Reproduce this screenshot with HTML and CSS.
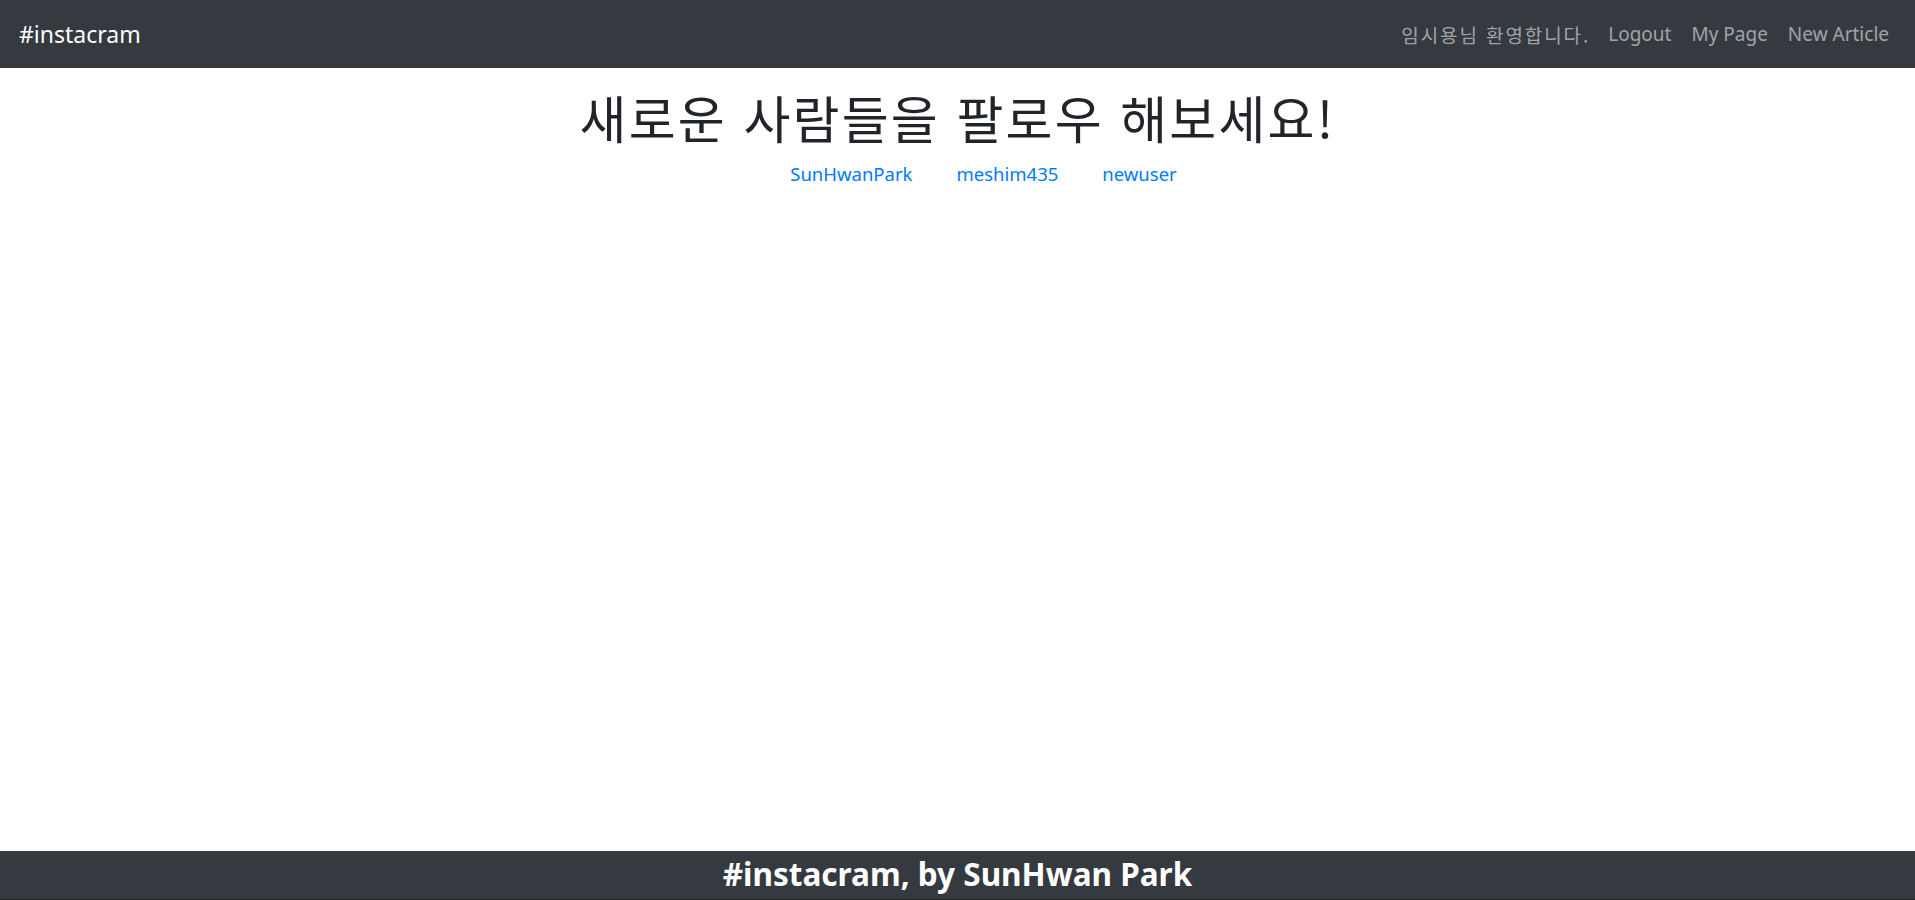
FILE: index.html
```html
<!DOCTYPE html>
<html lang="ko">
<head>
<meta charset="utf-8">
<title>#instacram</title>
<link rel="stylesheet" href="styles.css">
</head>
<body>
<div class="page">
  <nav class="navbar">
    <a class="brand" href="#">#instacram</a>
    <ul class="nav">
      <li class="nav-text">임시용님 환영합니다.</li>
      <li><a class="nav-link" href="#">Logout</a></li>
      <li><a class="nav-link" href="#">My Page</a></li>
      <li><a class="nav-link" href="#">New Article</a></li>
    </ul>
  </nav>
  <main class="content">
    <h1 class="title">새로운 사람들을 팔로우 해보세요!</h1>
    <ul class="users">
      <li><a href="#">SunHwanPark</a></li>
      <li><a href="#">meshim435</a></li>
      <li><a href="#">newuser</a></li>
    </ul>
  </main>
  <footer class="footer">
    <h3 class="footer-title">#instacram, by SunHwan Park</h3>
  </footer>
</div>
</body>
</html>
```

FILE: styles.css
```css
* { box-sizing: border-box; }
html, body { margin: 0; padding: 0; }
body {
  font-family: "Noto Sans", "Noto Sans CJK KR", sans-serif;
  color: #212529;
  background: #fff;
}
.page {
  min-height: 900px;
  display: flex;
  flex-direction: column;
}
.navbar {
  height: 68px;
  background: #343a40;
  display: flex;
  align-items: center;
  justify-content: space-between;
  padding: 0 26px 0 19px;
}
.brand {
  color: #fff;
  text-decoration: none;
  font-size: 23px;
  line-height: 1;
}
.nav {
  list-style: none;
  margin: 0;
  padding: 0;
  display: flex;
  align-items: center;
  gap: 20px;
}
.nav-text, .nav-link {
  color: rgba(255,255,255,.55);
  font-size: 19px;
  text-decoration: none;
}
.nav-text {
  font-family: "Noto Sans CJK KR", sans-serif;
  letter-spacing: 1.9px;
  margin-right: -2px;
}
.content {
  flex: 1;
  text-align: center;
}
.title {
  font-family: "Noto Sans CJK KR", sans-serif;
  font-weight: 400;
  font-size: 51px;
  letter-spacing: 2.2px;
  line-height: 1.2;
  margin: 19px 0 13px;
}
.users {
  list-style: none;
  margin: 0;
  padding: 0 0 0 52px;
  display: flex;
  justify-content: center;
  gap: 44px;
  font-size: 18.5px;
}
.users a {
  color: #007bff;
  text-decoration: none;
}
.footer {
  height: 49px;
  background: #343a40;
  border-bottom: 1px solid #222;
  display: flex;
  align-items: center;
  justify-content: center;
  padding-bottom: 3px;
}
.footer-title {
  margin: 0;
  color: #fff;
  font-size: 31.5px;
  font-weight: 700;
  line-height: 1;
}
```
